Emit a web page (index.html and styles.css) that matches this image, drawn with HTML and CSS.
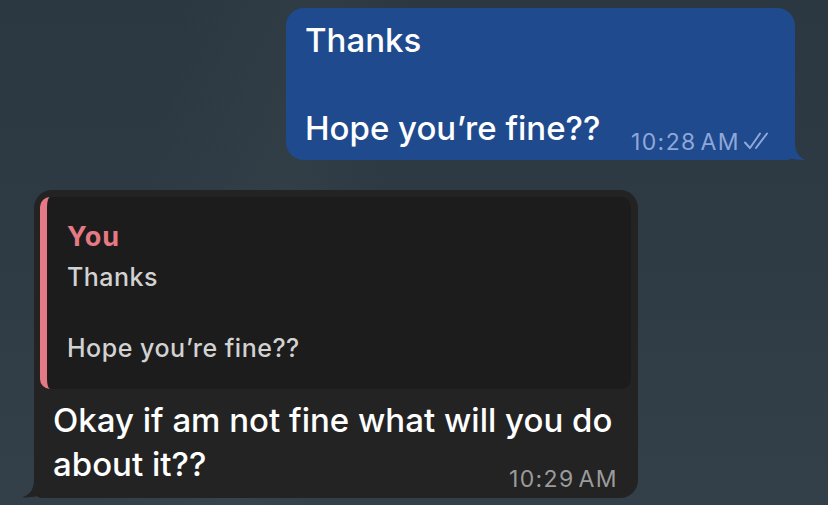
FILE: index.html
```html
<!DOCTYPE html>
<html>
<head>
<meta charset="utf-8">
<link rel="stylesheet" href="styles.css">
</head>
<body>
<div class="chat">
  <div class="row row-out">
    <div class="bubble bubble-out">
      <div class="text">
        <div class="line">Thanks</div>
        <div class="line">&nbsp;</div>
        <div class="line-last">
          <span class="line">Hope you’re fine??</span>
          <span class="meta meta-out">10:28 AM
            <svg class="checks" width="30" height="22" viewBox="0 0 30 22" fill="none" stroke="currentColor" stroke-width="2" stroke-linecap="round" stroke-linejoin="round">
              <path d="M2 12.5 L7 18 L17 3.5"/>
              <path d="M13 18 L24 3.5"/>
            </svg>
          </span>
        </div>
      </div>
    </div>
  </div>
  <div class="row row-in">
    <div class="bubble bubble-in">
      <div class="quote">
        <div class="quote-name">You</div>
        <div class="quote-line">Thanks</div>
        <div class="quote-line">&nbsp;</div>
        <div class="quote-line">Hope you’re fine??</div>
      </div>
      <div class="body-in">
        <div class="msg">Okay if am not fine what will you do<br>about it??</div>
        <span class="meta meta-in">10:29 AM</span>
      </div>
    </div>
  </div>
</div>
</body>
</html>
```

FILE: styles.css
```css
html, body {
  margin: 0;
  padding: 0;
}
body {
  width: 828px;
  height: 505px;
  overflow: hidden;
  font-family: Inter, "Noto Sans", sans-serif;
  background:
    linear-gradient(100deg, rgba(255,255,255,0) 20%, rgba(90,100,105,0.10) 35%, rgba(255,255,255,0) 45%),
    linear-gradient(180deg, #2c3841 0%, #2f3b44 50%, #33404a 100%);
}
.chat {
  display: flex;
  flex-direction: column;
  padding-top: 8px;
}
.row {
  display: flex;
}
.row-out {
  padding-left: 286px;
}
.row-in {
  padding-left: 34px;
  margin-top: 30px;
}
.bubble {
  position: relative;
  border-radius: 18px;
}
.bubble-out {
  width: 509px;
  box-sizing: border-box;
  background: #1f4a8e;
  color: #ffffff;
  padding: 10px 22px 10px 19px;
  border-bottom-right-radius: 8px;
}
.bubble-out::after {
  content: "";
  position: absolute;
  right: -10px;
  bottom: 0;
  width: 20px;
  height: 18px;
  background: #1f4a8e;
  clip-path: path("M0 0 L10 0 C10 10 14 15 20 18 C12 18 6 17 0 14 Z");
}
.text {
  font-size: 33px;
  font-weight: 500;
  line-height: 44px;
}
.line-last {
  display: flex;
  align-items: flex-end;
}
.meta {
  display: inline-flex;
  align-items: center;
  font-size: 23px;
  font-weight: 400;
  line-height: 20px;
  letter-spacing: 1.4px;
  word-spacing: -4px;
  white-space: nowrap;
  margin-bottom: -3px;
}
.meta-out {
  color: #8ea8d8;
  margin-left: auto;
}
.checks {
  margin-left: 3px;
  position: relative;
  top: -1px;
}
.bubble-in {
  width: 604px;
  box-sizing: border-box;
  background: #232323;
  padding: 7px 7px 12px 6px;
  border-bottom-left-radius: 8px;
}
.bubble-in::after {
  content: "";
  position: absolute;
  left: -12px;
  bottom: 0;
  width: 22px;
  height: 18px;
  background: #232323;
  clip-path: path("M22 0 L12 0 C12 10 8 15 0 18 C10 18 16 17 22 14 Z");
}
.quote {
  background: #1c1c1c;
  border-left: 7px solid #e57a85;
  border-radius: 10px;
  padding: 24px 20px 22px 20px;
  color: #d2d2d2;
}
.quote-name {
  color: #e57a85;
  font-weight: 700;
  font-size: 27px;
  line-height: 32px;
  margin-bottom: 7px;
  letter-spacing: 1px;
}
.quote-line {
  font-size: 25px;
  font-weight: 500;
  line-height: 35.5px;
  letter-spacing: 0.5px;
}
.body-in {
  display: grid;
  padding: 9px 13px 0 13px;
  color: #ffffff;
}
.msg {
  grid-area: 1 / 1;
  font-size: 33px;
  font-weight: 500;
  line-height: 44px;
  white-space: nowrap;
}
.meta-in {
  grid-area: 1 / 1;
  justify-self: end;
  align-self: end;
  color: #9b9b9b;
}
```
